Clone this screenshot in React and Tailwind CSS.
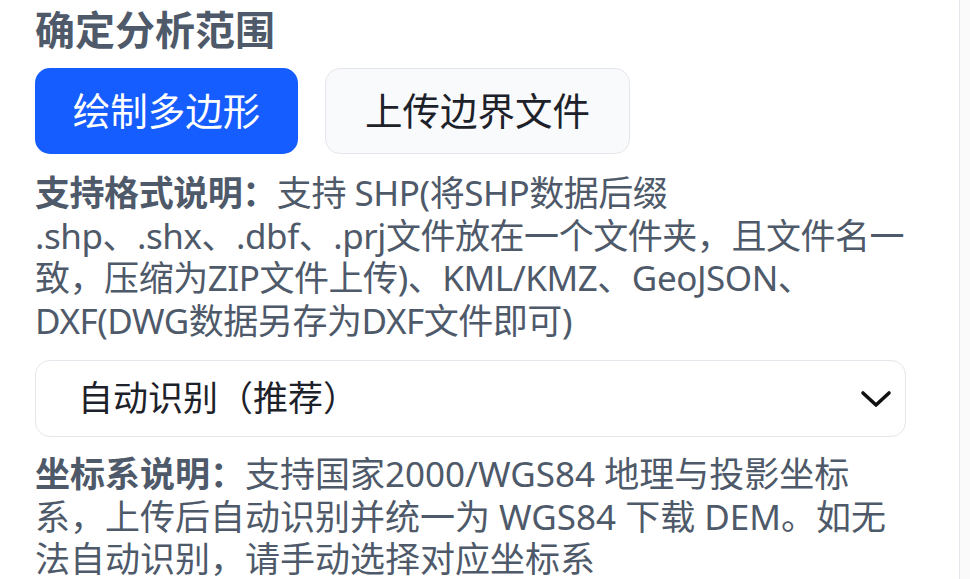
import React from 'react';

const font = { fontFamily: '"Noto Sans", "Noto Sans CJK SC", sans-serif' };

const Chevron = () => (
    <svg width="32" height="20" viewBox="0 0 32 20" fill="none">
        <polyline points="3,4 16,16 29,4" stroke="#111" strokeWidth="3.6" strokeLinecap="round" strokeLinejoin="round" />
    </svg>
);

const App = () => {
    return (
        <div className="flex h-[579px] w-[970px] overflow-hidden bg-white" style={font}>
            <div className="w-[960px] shrink-0 border-r border-[#e5e6eb] pl-[35px] pr-[53px]">

                {/* Title */}
                <h2 className="pt-[2px] text-[40px] leading-[56px] font-bold text-[#4e5969]">确定分析范围</h2>

                {/* Mode buttons */}
                <div className="mt-[10px] flex gap-[27px]">
                    <button className="h-[86px] w-[263px] rounded-[15px] bg-[#165dff] text-[37.5px] text-white">
                        绘制多边形
                    </button>
                    <button className="h-[86px] w-[305px] rounded-[15px] border border-[#e5e6eb] bg-[#f9fafb] text-[37.5px] text-[#1d2129]">
                        上传边界文件
                    </button>
                </div>

                {/* Format note */}
                <p className="mt-[18px] text-[35px] leading-[42.5px] tracking-[-0.45px] text-[#4e5969]">
                    <span className="font-bold">支持格式说明：</span>
                    支持 SHP(将SHP数据后缀 .shp、.shx、.dbf、.prj文件放在一个文件夹，且文件名一致，压缩为ZIP文件上传)、KML/KMZ、GeoJSON、DXF(DWG数据另存为DXF文件即可)
                </p>

                {/* Coordinate select */}
                <div className="mt-[18px] flex h-[77px] items-center justify-between rounded-[15px] border border-[#e5e6eb] bg-white pl-[42px] pr-[13px]">
                    <span className="text-[35px] text-[#1d2129]">自动识别（推荐）</span>
                    <Chevron />
                </div>

                {/* Coordinate note */}
                <p className="mt-[16px] text-[35px] leading-[42.5px] text-[#4e5969]">
                    <span className="font-bold">坐标系说明：</span>
                    支持国家2000/WGS84 地理与投影坐标系，上传后自动识别并统一为 WGS84 下载 DEM。如无法自动识别，请手动选择对应坐标系
                </p>
            </div>
            <div className="flex-1 bg-[#fafafa]" />
        </div>
    );
};

export default App;
